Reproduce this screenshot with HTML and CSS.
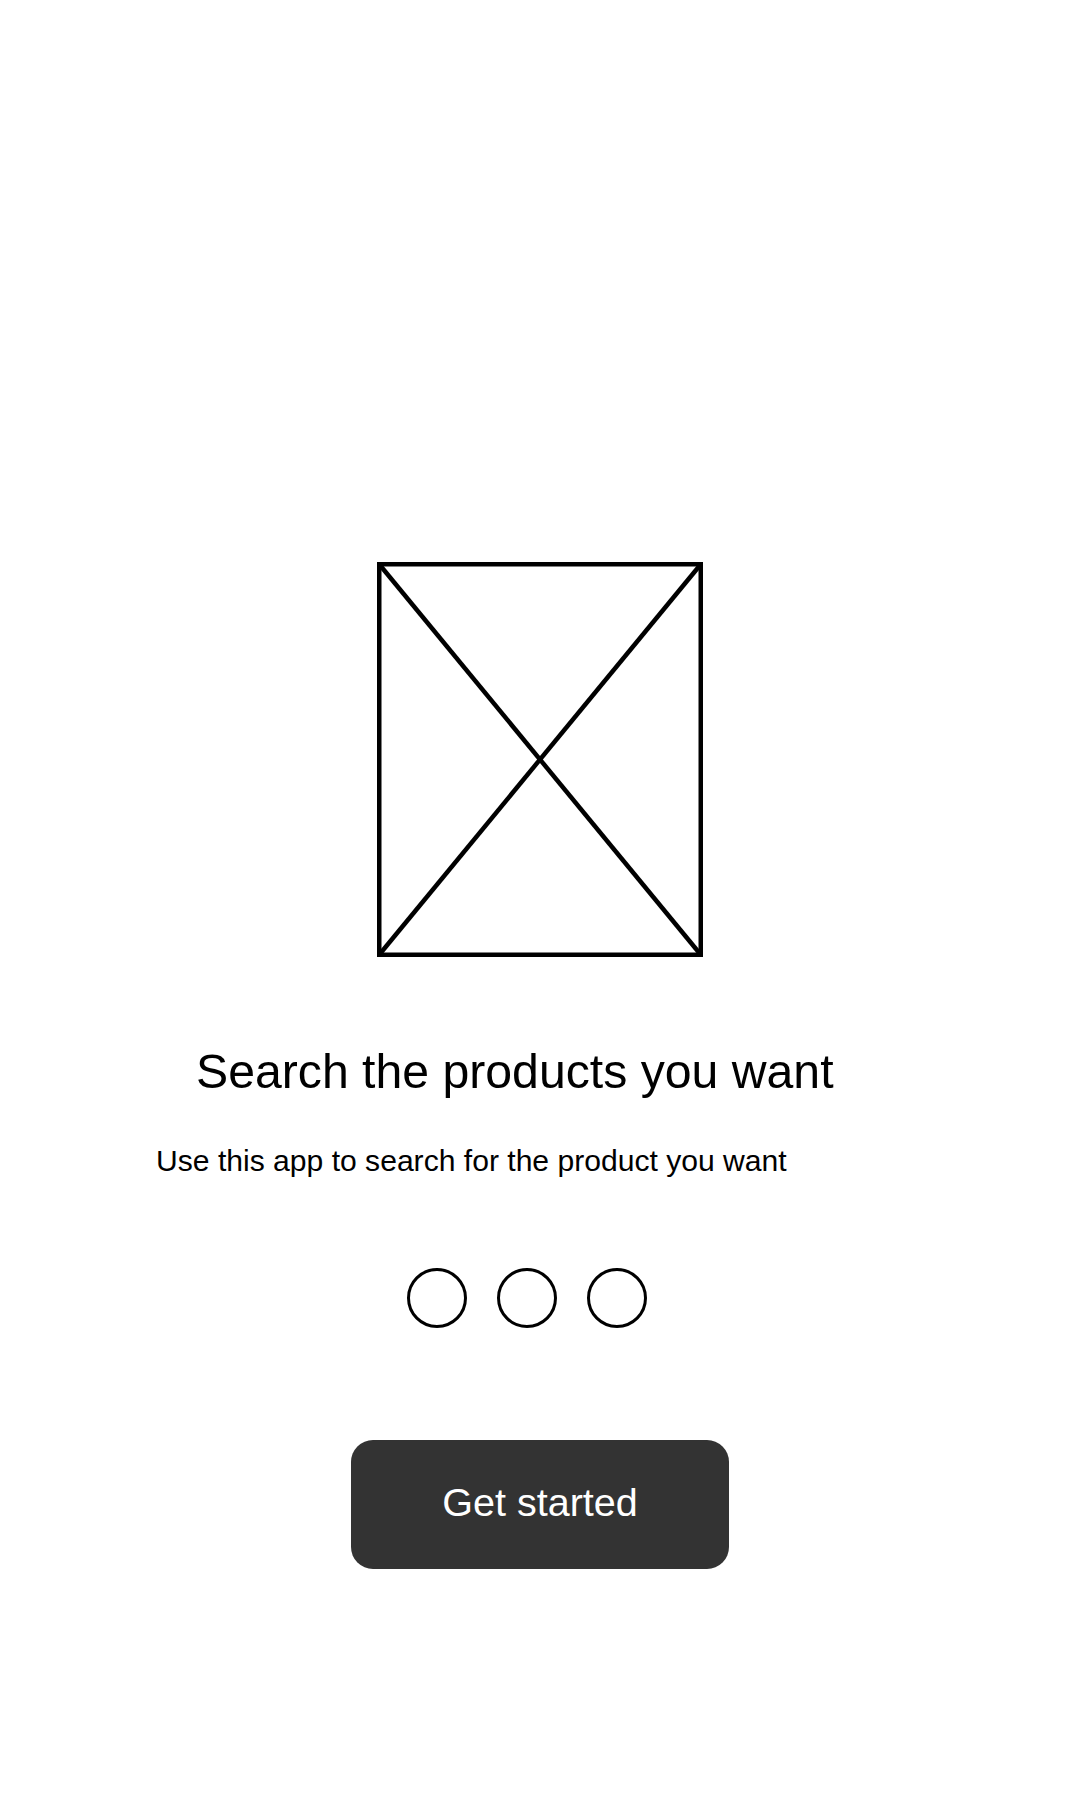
FILE: index.html
```html
<!DOCTYPE html>
<html lang="en">
<head>
<meta charset="utf-8">
<title>Onboarding</title>
<link rel="stylesheet" href="styles.css">
</head>
<body>
<main class="screen">
  <div class="hero">
    <svg class="placeholder" width="326" height="395" viewBox="0 0 326 395" aria-hidden="true">
      <rect x="2.25" y="2.25" width="321.5" height="390.5" fill="none" stroke="#000" stroke-width="4.5"/>
      <line x1="2" y1="2" x2="324" y2="393" stroke="#000" stroke-width="4.5"/>
      <line x1="324" y1="2" x2="2" y2="393" stroke="#000" stroke-width="4.5"/>
    </svg>
  </div>
  <h1 class="title">Search the products you want</h1>
  <p class="subtitle">Use this app to search for the product you want</p>
  <div class="dots">
    <span class="dot"></span>
    <span class="dot"></span>
    <span class="dot"></span>
  </div>
  <div class="actions">
    <button class="cta" type="button">Get started</button>
  </div>
</main>
</body>
</html>
```
FILE: styles.css
```css
html, body {
  margin: 0;
  padding: 0;
  background: #ffffff;
}

body {
  font-family: "Liberation Sans", Arial, sans-serif;
  color: #000000;
}

.screen {
  width: 1080px;
  min-height: 1800px;
  display: flex;
  flex-direction: column;
  padding-top: 562px;
  box-sizing: border-box;
}

.hero {
  display: flex;
  justify-content: center;
}

.placeholder {
  display: block;
}

.title {
  margin: 86px 0 0 196px;
  font-size: 48.2px;
  line-height: 56px;
  font-weight: 400;
}

.subtitle {
  margin: 44px 0 0 156px;
  font-size: 30.1px;
  line-height: 36px;
}

.dots {
  display: flex;
  gap: 30px;
  margin: 89px 0 0 407px;
}

.dot {
  width: 60px;
  height: 60px;
  box-sizing: border-box;
  border: 3px solid #000;
  border-radius: 50%;
}

.actions {
  display: flex;
  justify-content: center;
  margin-top: 112px;
}

.cta {
  width: 378px;
  height: 129px;
  border: none;
  border-radius: 22px;
  background: #333333;
  color: #ffffff;
  font-family: "Liberation Sans", Arial, sans-serif;
  font-size: 39.5px;
  padding: 0 0 4px 0;
}
```
